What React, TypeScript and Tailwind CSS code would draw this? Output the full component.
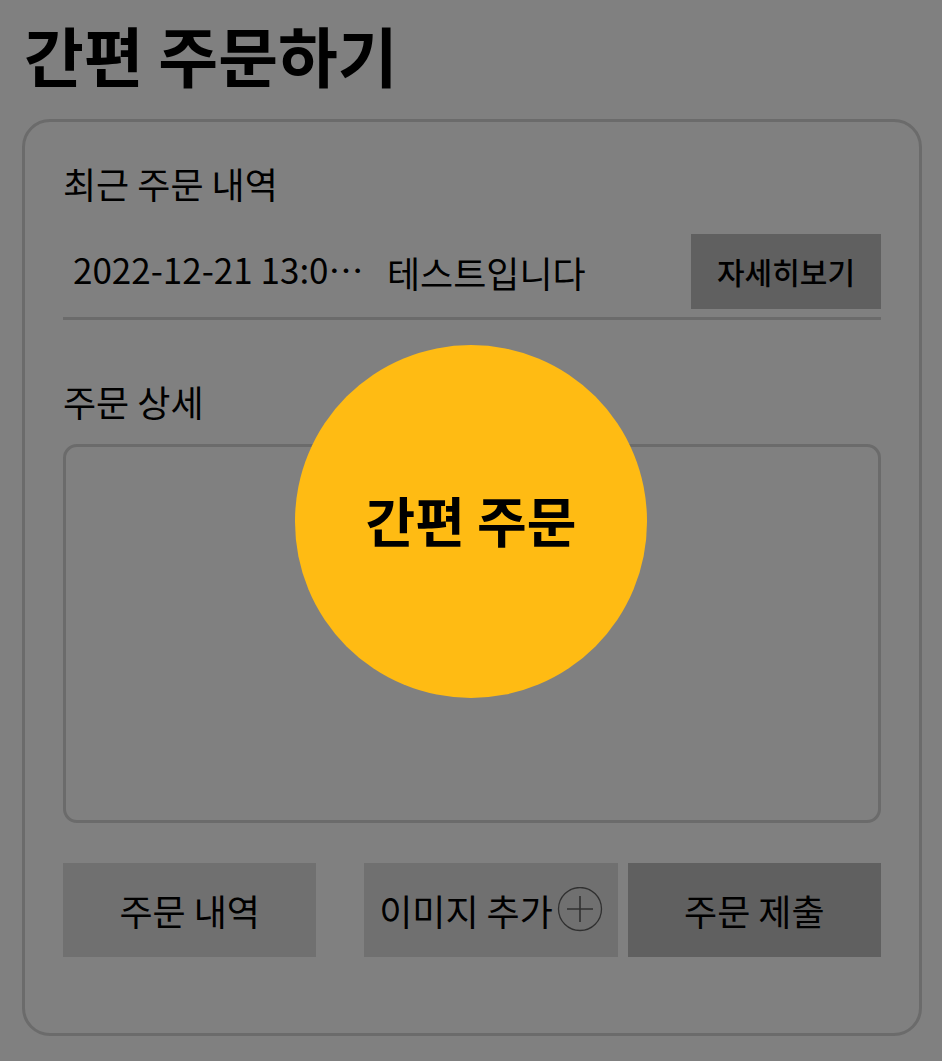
import React from "react";

function PlusCircleIcon() {
  return (
    <svg className="size-[46px] shrink-0 text-[#303030]" viewBox="0 0 46 46" fill="none" stroke="currentColor" aria-hidden="true">
      <circle cx="23" cy="22" r="21.5" strokeWidth="1.3" />
      <path d="M10 22h26M23 9v26" strokeWidth="1.6" />
    </svg>
  );
}

export default function App() {
  return (
    <div className="relative bg-[#808080] font-['Noto_Sans_CJK_KR',sans-serif] text-black">
      <main className="pb-[25px] pl-[22px] pr-5 pt-4">
        <h1 className="pl-[2px] text-[65px] font-bold leading-[76px]">간편 주문하기</h1>
        <section className="mt-[27px] rounded-[28px] border-[3px] border-[#6b6b6b] px-[38px] pb-[76px] pt-[38px]">
          <h2 className="text-[36px] leading-[46px]">최근 주문 내역</h2>
          <div className="mt-7 flex items-center gap-5 border-b-[3px] border-[#6b6b6b] pb-2">
            <time dateTime="2022-12-21" className="w-[304px] whitespace-nowrap pb-1 pl-[10px] text-[35px]">
              2022-12-21 13:0…
            </time>
            <span className="min-w-0 flex-1 text-[36px]">테스트입니다</span>
            <button type="button" className="h-[75px] w-[190px] bg-[#606060] text-[30px] font-medium">
              자세히보기
            </button>
          </div>
          <label htmlFor="detail" className="mt-[58px] block text-[36px] leading-[46px]">
            주문 상세
          </label>
          <textarea
            id="detail"
            className="mt-5 block h-[379px] w-full resize-none rounded-[14px] border-[3px] border-[#6b6b6b] bg-transparent p-4 text-[36px]"
          />
          <div className="mt-10 flex text-[36px]">
            <button type="button" className="h-[94px] flex-1 bg-[#707070]">
              주문 내역
            </button>
            <button type="button" className="ml-12 flex h-[94px] flex-1 items-center justify-center gap-1 whitespace-nowrap bg-[#707070]">
              이미지 추가
              <PlusCircleIcon />
            </button>
            <button type="button" className="ml-[10px] h-[94px] flex-1 bg-[#606060]">
              주문 제출
            </button>
          </div>
        </section>
      </main>
      <button
        type="button"
        className="absolute left-1/2 top-[345px] h-[353px] w-[352px] -translate-x-1/2 rounded-full bg-[#ffbb13] pb-1 text-[54px] font-bold"
      >
        간편 주문
      </button>
    </div>
  );
}
